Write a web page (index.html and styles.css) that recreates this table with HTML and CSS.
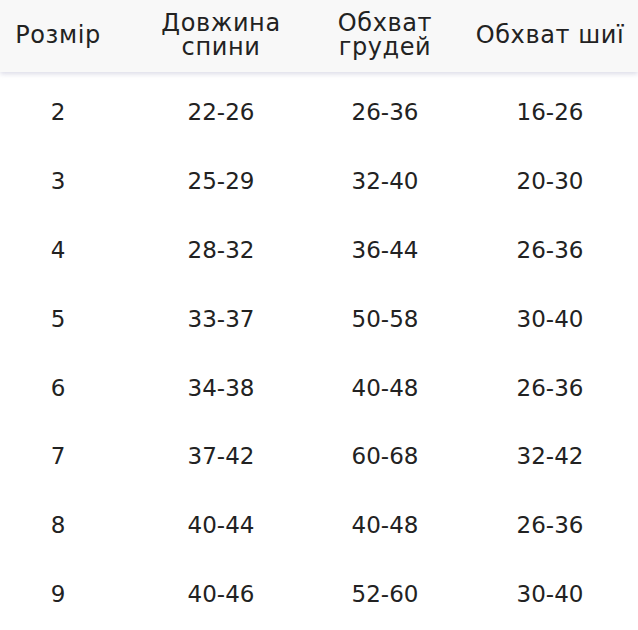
FILE: index.html
```html
<!DOCTYPE html>
<html lang="uk">
<head>
<meta charset="utf-8">
<link rel="stylesheet" href="styles.css">
</head>
<body>
<div class="table">
  <div class="head row">
    <div class="cell">Розмір</div>
    <div class="cell">Довжина<br>спини</div>
    <div class="cell">Обхват<br>грудей</div>
    <div class="cell c4">Обхват шиї</div>
  </div>
  <div class="body">
    <div class="row"><div class="cell">2</div><div class="cell">22-26</div><div class="cell">26-36</div><div class="cell c4">16-26</div></div>
    <div class="row"><div class="cell">3</div><div class="cell">25-29</div><div class="cell">32-40</div><div class="cell c4">20-30</div></div>
    <div class="row"><div class="cell">4</div><div class="cell">28-32</div><div class="cell">36-44</div><div class="cell c4">26-36</div></div>
    <div class="row"><div class="cell">5</div><div class="cell">33-37</div><div class="cell">50-58</div><div class="cell c4">30-40</div></div>
    <div class="row"><div class="cell">6</div><div class="cell">34-38</div><div class="cell">40-48</div><div class="cell c4">26-36</div></div>
    <div class="row"><div class="cell">7</div><div class="cell">37-42</div><div class="cell">60-68</div><div class="cell c4">32-42</div></div>
    <div class="row"><div class="cell">8</div><div class="cell">40-44</div><div class="cell">40-48</div><div class="cell c4">26-36</div></div>
    <div class="row"><div class="cell">9</div><div class="cell">40-46</div><div class="cell">52-60</div><div class="cell c4">30-40</div></div>
  </div>
</div>
</body>
</html>
```

FILE: styles.css
```css
html, body {
  margin: 0;
  padding: 0;
  background: #ffffff;
}
body {
  font-family: "DejaVu Sans", "Open Sans", sans-serif;
  color: #222222;
  font-size: 23px;
  width: 638px;
  height: 630px;
  overflow: hidden;
}
.table {
  display: flex;
  flex-direction: column;
}
.row {
  display: grid;
  grid-template-columns: 116px 210px 118px 194px;
  align-items: center;
  height: 68.8px;
}
.head {
  height: 72px;
  padding-bottom: 3px;
  box-sizing: border-box;
  background: #f8f8f8;
  box-shadow: 0 2px 5px rgba(150, 150, 185, 0.35);
  font-size: 24px;
  letter-spacing: 0.6px;
  line-height: 24px;
  position: relative;
  z-index: 1;
}
.body {
  padding-top: 6px;
}
.cell {
  text-align: center;
  white-space: nowrap;
}
.c4 {
  padding-left: 18px;
}
```
